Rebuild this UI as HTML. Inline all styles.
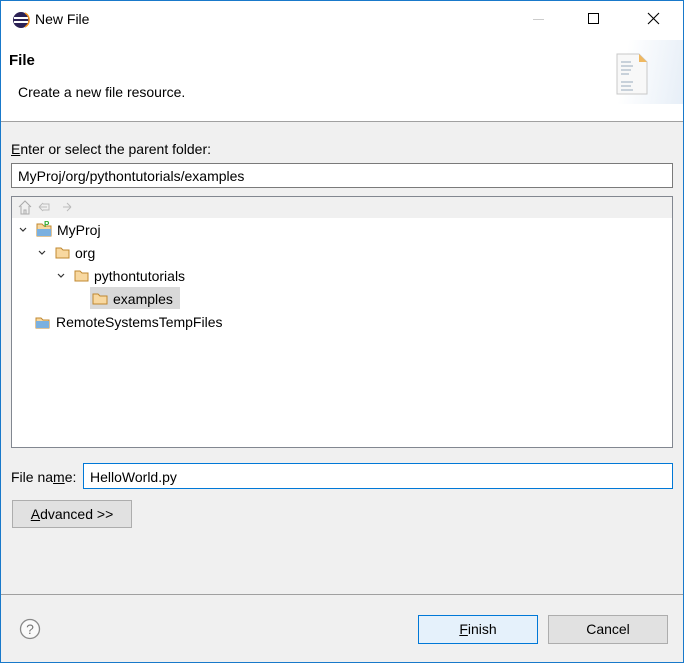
<!DOCTYPE html>
<html><head><style>
*{box-sizing:border-box;margin:0;padding:0}
body{width:684px;height:663px;overflow:hidden;font-family:"Liberation Sans",sans-serif;font-size:14px;color:#000;background:#f0f0f0;position:relative}
.a{position:absolute;white-space:nowrap}
.frame{position:absolute;left:0;top:0;width:684px;height:663px;border:1px solid #1979ca;pointer-events:none}
.btn{position:absolute;border:1px solid #adadad;background:#e1e1e1;text-align:center;line-height:26px;font-size:14px}
u{text-decoration:underline}
</style></head><body>
<div class="a" style="left:0;top:0;width:684px;height:121px;background:#fff"></div>
<div class="a" style="left:0;top:121px;width:684px;height:1px;background:#a0a0a0"></div>
<svg class="a" style="left:12px;top:11px" width="18" height="18"><circle cx="9" cy="9" r="8" fill="#2c2255"/><rect x="2" y="6" width="14" height="2" fill="#fff"/><rect x="2" y="10" width="14" height="2" fill="#fff"/><path d="M13 2a8 8 0 0 1 0 14" stroke="#f7941e" stroke-width="1.5" fill="none"/></svg>
<div class="a" style="left:35px;top:11px;font-size:14px">New File</div>
<div class="a" style="left:533px;top:19px;width:11px;height:1px;background:#ccc"></div>
<div class="a" style="left:588px;top:13px;width:11px;height:11px;border:1px solid #000"></div>
<svg class="a" style="left:647px;top:12px" width="13" height="13"><path d="M1 1L12 12M12 1L1 12" stroke="#000" stroke-width="1.1"/></svg>
<div class="a" style="left:9px;top:52px;font-weight:bold;font-size:15px">File</div>
<div class="a" style="left:18px;top:84px">Create a new file resource.</div>
<div class="a" style="left:600px;top:40px;width:84px;height:64px;background:linear-gradient(100deg,#fff 30%,#e6eef7)"></div>
<svg class="a" style="left:615px;top:52px" width="36" height="46"><path d="M2 2h22l8 8v32H2z" fill="#f8f8f8" stroke="#c8c8c8"/><path d="M24 2v8h8" fill="#f0b860"/><g stroke="#9ab" stroke-width="1"><path d="M6 10h10M6 14h12M6 18h10M6 22h8M6 30h12M6 34h10M6 38h12"/></g></svg>
<div class="a" style="left:11px;top:141px"><u>E</u>nter or select the parent folder:</div>
<div class="a" style="left:11px;top:163px;width:662px;height:25px;background:#fff;border:1px solid #7a7a7a;padding:4px 6px">MyProj/org/pythontutorials/examples</div>
<div class="a" style="left:11px;top:196px;width:662px;height:252px;background:#fff;border:1px solid #828790"></div>
<div class="a" style="left:12px;top:197px;width:660px;height:21px;background:#f0f0f0"></div>
<svg class="a" style="left:17px;top:199px" width="64" height="17"><path d="M2 8L8 2l6 6M4 7v8h8V7M7 15v-4h2v4" stroke="#aaa" fill="none"/><path d="M30 8h-8M22 8l4-4M22 8l4 4M26 5h6v6h-6" stroke="#bbb" fill="none"/><path d="M46 8h8M54 8l-4-4M54 8l-4 4" stroke="#bbb" fill="none"/></svg>
<svg class="a" style="left:0;top:218px" width="200" height="115">
<g stroke="#333" fill="none" stroke-width="1.2"><path d="M20 10l3 3 3-3M39 33l3 3 3-3M58 56l3 3 3-3"/></g>
<g fill="#f8d8a0" stroke="#c08830"><path d="M37 18v-12h5l2 2h7v10z"/><path d="M56 40v-10h5l2 2h6v8z"/><path d="M75 63v-10h5l2 2h6v8z"/><path d="M93 86v-10h5l2 2h6v8z"/><path d="M36 110v-10h5l2 2h6v8z"/></g>
<rect x="36" y="103" width="13" height="7" fill="#7ab0e0"/><rect x="37" y="11" width="14" height="7" fill="#7ab0e0"/>
<text x="44" y="9" font-size="8" fill="#3a3" font-family="Liberation Sans" font-weight="bold">P</text></svg>
<div class="a" style="left:57px;top:222px">MyProj</div>
<div class="a" style="left:75px;top:245px">org</div>
<div class="a" style="left:94px;top:268px">pythontutorials</div>
<div class="a" style="left:90px;top:287px;width:90px;height:22px;background:#d9d9d9"></div>
<svg class="a" style="left:92px;top:292px" width="18" height="14"><path d="M1 12V2h5l2 2h7v8z" fill="#f8d8a0" stroke="#c08830"/></svg>
<div class="a" style="left:113px;top:291px">examples</div>
<div class="a" style="left:56px;top:314px">RemoteSystemsTempFiles</div>
<div class="a" style="left:11px;top:469px">File na<u>m</u>e:</div>
<div class="a" style="left:83px;top:463px;width:590px;height:26px;background:#fff;border:1px solid #0078d7;padding:5px 6px">HelloWorld.py</div>
<div class="btn" style="left:12px;top:500px;width:120px;height:28px"><u>A</u>dvanced &gt;&gt;</div>
<div class="a" style="left:0;top:594px;width:684px;height:1px;background:#a0a0a0"></div>
<svg class="a" style="left:19px;top:618px" width="22" height="22"><circle cx="11" cy="11" r="9.5" fill="#fafafa" stroke="#888" stroke-width="1.3"/><text x="11" y="16" text-anchor="middle" font-size="14" fill="#777" font-family="Liberation Sans">?</text></svg>
<div class="btn" style="left:418px;top:615px;width:120px;height:29px;background:#e5f1fb;border-color:#0078d7;line-height:27px"><u>F</u>inish</div>
<div class="btn" style="left:548px;top:615px;width:120px;height:29px;line-height:27px">Cancel</div>
<div class="frame"></div>
</body></html>
